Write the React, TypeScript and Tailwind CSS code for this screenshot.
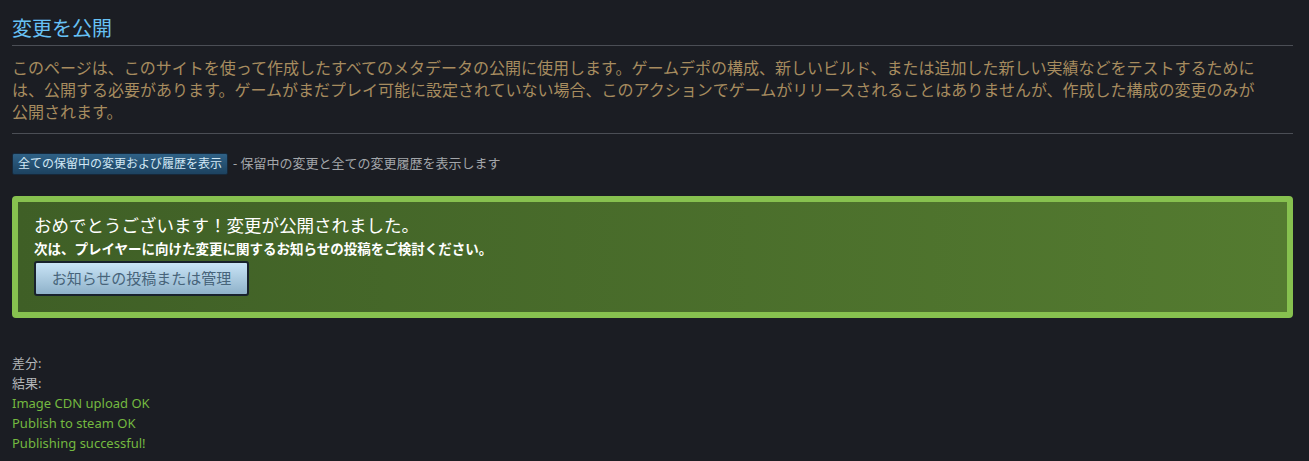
import React from 'react';

const font = { fontFamily: '"Noto Sans", "Noto Sans CJK JP", sans-serif' };

// 公開結果のログ行
const results = ['Image CDN upload OK', 'Publish to steam OK', 'Publishing successful!'];

export default function App() {
  return (
    <div className="min-h-screen bg-[#1b1d23] pl-3 pr-4 pt-4 pb-4" style={font}>
      {/* タイトル */}
      <h1 className="text-[20px] leading-[26px] text-[#67c1f5] pb-[3px] border-b border-[#4b4e55]">
        変更を公開
      </h1>

      {/* 説明文 */}
      <p className="mt-[11px] pb-[10px] text-[16px] leading-[22px] text-[#a78c5f] border-b border-[#4b4e55]">
        このページは、このサイトを使って作成したすべてのメタデータの公開に使用します。ゲームデポの構成、新しいビルド、または追加した新しい実績などをテストするために
        <br />
        は、公開する必要があります。ゲームがまだプレイ可能に設定されていない場合、このアクションでゲームがリリースされることはありませんが、作成した構成の変更のみが
        <br />
        公開されます。
      </p>

      {/* 履歴ボタン */}
      <div className="mt-[19px] flex items-center gap-[5px]">
        <button className="h-[22px] px-[5px] rounded-[2px] border border-[#16283a] bg-gradient-to-b from-[#2f6186] to-[#1d4260] text-[12px] leading-[20px] text-[#d2e8f5]">
          全ての保留中の変更および履歴を表示
        </button>
        <span className="text-[13px] text-[#a3a6aa]">- 保留中の変更と全ての変更履歴を表示します</span>
      </div>

      {/* 成功メッセージ */}
      <div className="mt-[21px] h-[122px] rounded-[4px] border-[6px] border-[#87c14f] bg-gradient-to-r from-[#3f5f26] to-[#547b30] pl-[16px] pt-[11px]">
        <div className="text-[17.5px] leading-[24px] text-white">おめでとうございます！変更が公開されました。</div>
        <div className="mt-[3px] text-[13.5px] leading-[18px] font-semibold text-white">
          次は、プレイヤーに向けた変更に関するお知らせの投稿をご検討ください。
        </div>
        <button className="mt-[3px] w-[215px] h-[35px] rounded-[3px] border-2 border-[#18222d] bg-gradient-to-b from-[#c9e4f6] to-[#8fb2ca] text-[15px] text-[#47647a]">
          お知らせの投稿または管理
        </button>
      </div>

      {/* 結果ログ */}
      <div className="mt-[35px] text-[13px] leading-[20px]">
        <div className="text-[#b3b6b9]">差分:</div>
        <div className="text-[#b3b6b9]">結果:</div>
        {results.map((r) => (
          <div key={r} className="text-[#74b940]">
            {r}
          </div>
        ))}
      </div>
    </div>
  );
}
